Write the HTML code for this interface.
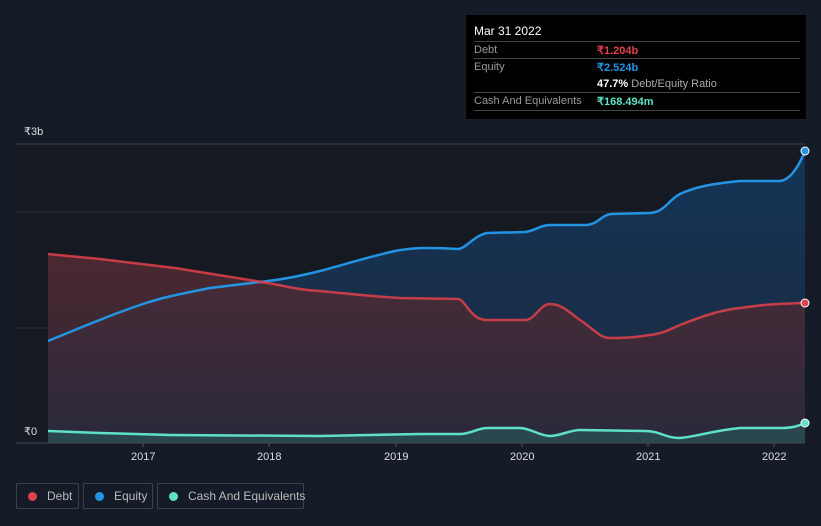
<!DOCTYPE html>
<html><head><style>
body{margin:0;width:821px;height:526px;background:#161c27;font-family:"Liberation Sans",sans-serif;overflow:hidden;position:relative}
.tt{position:absolute;left:466px;top:15px;width:340px;height:104px;background:#000;color:#ccc;font-size:11px}
.row{position:absolute;left:8px;width:326px;border-top:1px solid #444}
.l{position:absolute;left:0;color:#9a9a9a;white-space:nowrap}
.v{position:absolute;left:123px;font-weight:bold;white-space:nowrap}
.leg{position:absolute;top:483px;height:26px;border:1px solid #3a404c;border-radius:2px;color:#bbb;font-size:12px;line-height:24px;box-sizing:border-box;white-space:nowrap}
.dot{display:inline-block;width:9px;height:9px;border-radius:50%;margin:0 10px 0 11px;vertical-align:-1px}
.ax{position:absolute;color:#ddd;font-size:11px}
</style></head><body>
<svg width="821" height="526" style="position:absolute;left:0;top:0">
<defs>
<linearGradient id="ge" x1="0" y1="0" x2="0" y2="1"><stop offset="0" stop-color="#143456"/><stop offset="1" stop-color="#1c2a40"/></linearGradient>
<linearGradient id="gd" x1="0" y1="0" x2="0" y2="1"><stop offset="0" stop-color="#552a32"/><stop offset="1" stop-color="#2c2a3a"/></linearGradient>
</defs>
<rect x="16" y="144" width="789" height="299" fill="#141922"/>
<line x1="16" y1="144" x2="805" y2="144" stroke="#3a3f48"/>
<line x1="16" y1="212" x2="805" y2="212" stroke="#2a2f38"/>
<line x1="16" y1="328" x2="805" y2="328" stroke="#2a2f38"/>
<path d="M48,341 C80,328 110,315 140,305 C160,298 175,295 210,288 L268,281 C285,279 300,276 320,271 C340,266 360,259 395,251 C410,248 425,247 458,249 C465,249 475,235 487,233 L525,232 C535,231 540,225 550,225 L585,225 C598,225 602,214 612,214 L650,213 C665,212 668,200 680,194 C695,187 710,184 740,181 L780,181 C790,180 798,168 805,151 L805,443 L48,443 Z" fill="url(#ge)"/>
<path d="M48,254 L100,259 L175,268 L268,283 C290,287 300,290 320,291 C350,294 380,297 400,298 L458,299 C466,300 470,320 487,320 L525,320 C535,320 540,304 550,304 C562,304 570,313 580,320 C595,330 600,338 610,338 C640,338 645,335 650,335 C665,333 670,329 680,325 C700,317 720,310 740,308 C760,305 770,304 805,303 L805,443 L48,443 Z" fill="url(#gd)" opacity="0.85"/>
<path d="M48,431 L100,433 L170,435 L320,436 L420,434 L460,434 C470,434 478,428 487,428 L520,428 C530,428 540,436 550,436 C560,436 570,430 580,430 L645,431 C660,431 665,438 680,438 C700,436 710,431 740,428 L780,428 C795,428 800,425 805,423 L805,443 L48,443 Z" fill="#2a4f55" opacity="0.8"/>
<path d="M48,341 C80,328 110,315 140,305 C160,298 175,295 210,288 L268,281 C285,279 300,276 320,271 C340,266 360,259 395,251 C410,248 425,247 458,249 C465,249 475,235 487,233 L525,232 C535,231 540,225 550,225 L585,225 C598,225 602,214 612,214 L650,213 C665,212 668,200 680,194 C695,187 710,184 740,181 L780,181 C790,180 798,168 805,151" fill="none" stroke="#2394e2" stroke-width="2.5"/>
<path d="M48,254 L100,259 L175,268 L268,283 C290,287 300,290 320,291 C350,294 380,297 400,298 L458,299 C466,300 470,320 487,320 L525,320 C535,320 540,304 550,304 C562,304 570,313 580,320 C595,330 600,338 610,338 C640,338 645,335 650,335 C665,333 670,329 680,325 C700,317 720,310 740,308 C760,305 770,304 805,303" fill="none" stroke="#e0414b" stroke-width="2.5" opacity="0.85"/>
<path d="M48,431 L100,433 L170,435 L320,436 L420,434 L460,434 C470,434 478,428 487,428 L520,428 C530,428 540,436 550,436 C560,436 570,430 580,430 L645,431 C660,431 665,438 680,438 C700,436 710,431 740,428 L780,428 C795,428 800,425 805,423" fill="none" stroke="#5fe0c8" stroke-width="2.5"/>
<circle cx="805" cy="151" r="4" fill="#2394e2" stroke="#fff" stroke-width="1"/>
<circle cx="805" cy="303" r="4" fill="#e0414b" stroke="#fff" stroke-width="1"/>
<circle cx="805" cy="423" r="4" fill="#5fe0c8" stroke="#fff" stroke-width="1"/>
<line x1="16" y1="443" x2="805" y2="443" stroke="#444a55"/>
<g stroke="#555"><line x1="143" y1="443" x2="143" y2="447"/><line x1="269" y1="443" x2="269" y2="447"/><line x1="396" y1="443" x2="396" y2="447"/><line x1="522" y1="443" x2="522" y2="447"/><line x1="648" y1="443" x2="648" y2="447"/><line x1="774" y1="443" x2="774" y2="447"/></g>
</svg>
<div class="ax" style="left:24px;top:125px">₹3b</div>
<div class="ax" style="left:24px;top:425px">₹0</div>
<div class="ax" style="left:131px;top:451px">2017</div>
<div class="ax" style="left:257px;top:451px">2018</div>
<div class="ax" style="left:384px;top:451px">2019</div>
<div class="ax" style="left:510px;top:451px">2020</div>
<div class="ax" style="left:636px;top:451px">2021</div>
<div class="ax" style="left:762px;top:451px">2022</div>
<div class="tt">
<div style="position:absolute;left:8px;top:9px;color:#fff;font-size:12px">Mar 31 2022</div>
<div class="row" style="top:26px"><span class="l" style="top:2px">Debt</span><span class="v" style="top:2px;color:#e0414b">₹1.204b</span></div>
<div class="row" style="top:43px"><span class="l" style="top:2px">Equity</span><span class="v" style="top:2px;color:#2394e2">₹2.524b</span><span class="v" style="top:19px;color:#fff">47.7% <span style="color:#aaa;font-weight:normal">Debt/Equity Ratio</span></span></div>
<div class="row" style="top:77px"><span class="l" style="top:2px">Cash And Equivalents</span><span class="v" style="top:2px;color:#5fe0c8">₹168.494m</span></div>
<div class="row" style="top:95px"></div>
</div>
<div class="leg" style="left:16px;width:63px"><span class="dot" style="background:#e0414b"></span>Debt</div>
<div class="leg" style="left:83px;width:70px"><span class="dot" style="background:#2394e2"></span>Equity</div>
<div class="leg" style="left:157px;width:147px"><span class="dot" style="background:#5fe0c8"></span>Cash And Equivalents</div>
</body></html>
